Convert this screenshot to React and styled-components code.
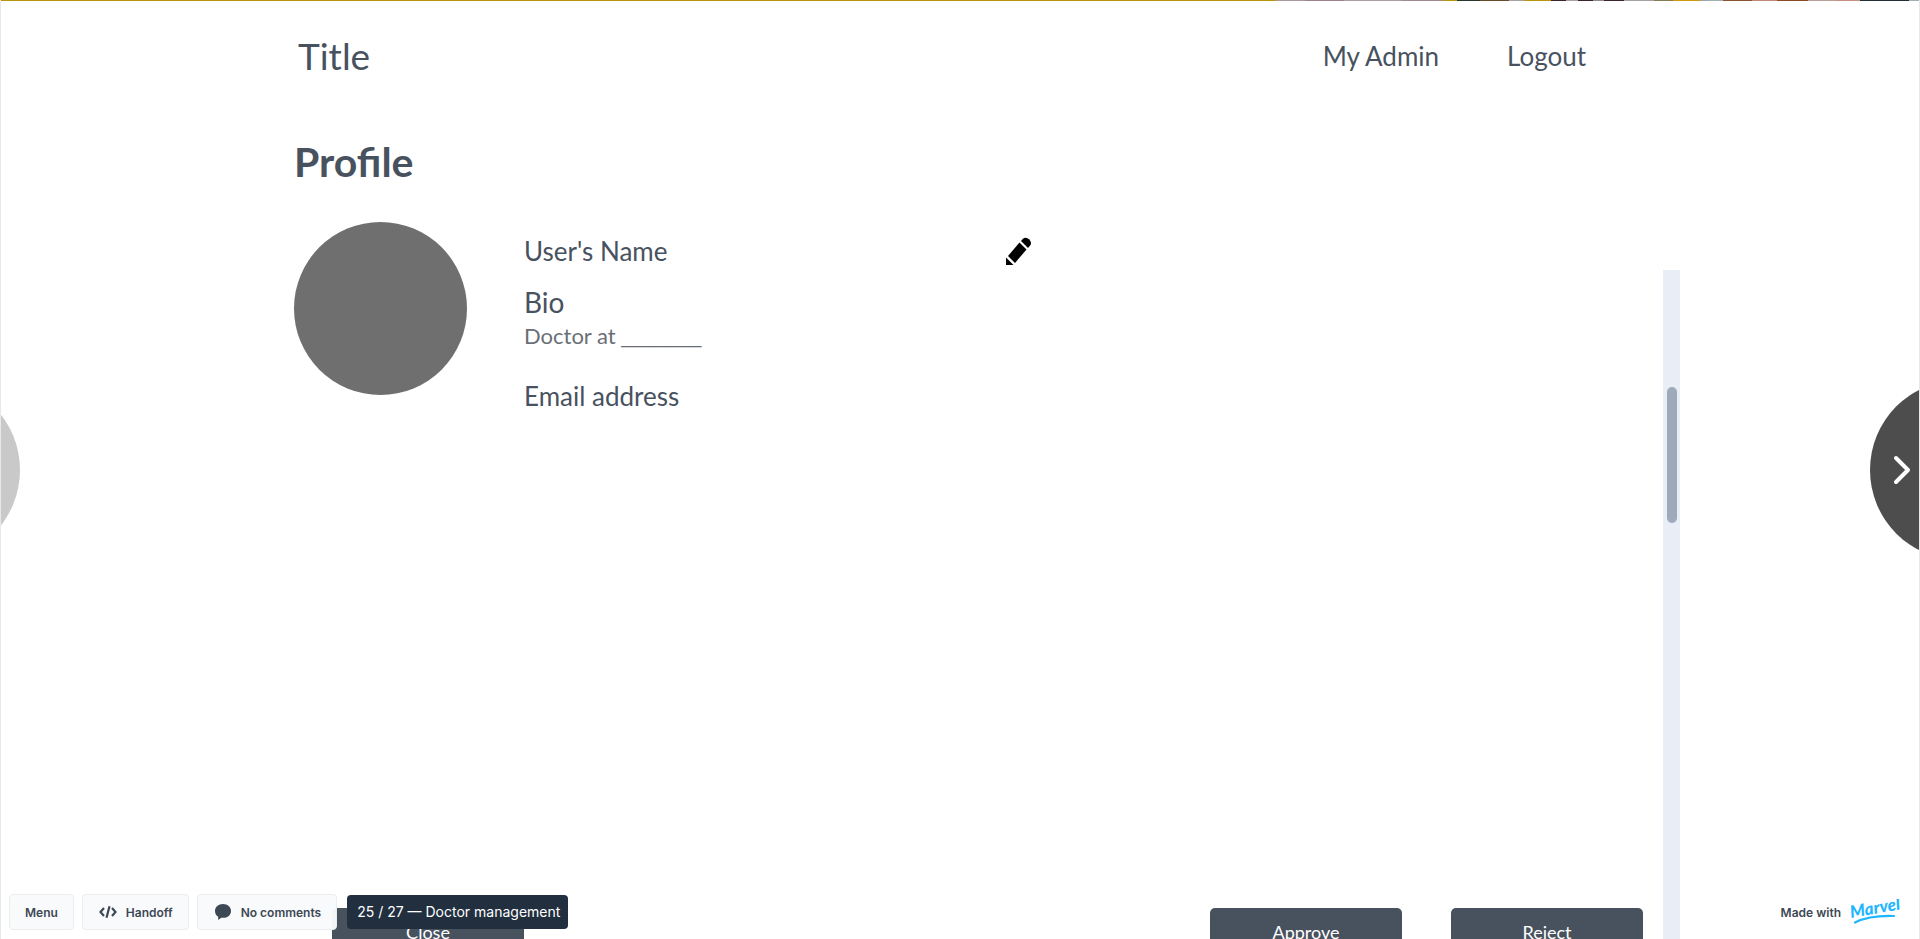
import React from "react";
import styled, { createGlobalStyle } from "styled-components";

const ui = `Inter, "Liberation Sans", sans-serif`;

const GlobalStyle = createGlobalStyle`
  *, *::before, *::after { box-sizing: border-box; }
  body { margin: 0; background: #fff; font-family: Lato, "Liberation Sans", sans-serif; color: #48525f; }
  h1, h2, h3, p { margin: 0; font-weight: 400; }
  button { font: inherit; border: 0; cursor: pointer; }
`;

const Stage = styled.div`
  position: relative;
  height: 100vh;
  overflow: hidden;
  display: flex;
  flex-direction: column;
  border: solid #e8e8e8;
  border-width: 0 1px;
`;

/* The lower edge of the cover photo, which shows above the page. */
const PhotoEdge = styled.div`
  flex: none;
  height: 1px;
  background: linear-gradient(90deg,
    #b8960c 0 66.5%, #a9989c 66.5% 68%, #9c8387 68% 70%, #a9a0a4 70% 73%, #a08a8e 73% 75.2%,
    #b8960c 75.2% 75.9%, #26352f 75.9% 77.1%, #6b4a28 77.1% 78.6%, #a5a0a2 78.6% 79.4%,
    #b8960c 79.4% 80.8%, #3b2430 80.8% 81.6%, #a5a0a2 81.6% 82.2%, #3b2430 82.2% 83%,
    #8f8a90 83% 83.6%, #3b2430 83.6% 84.6%, #a5a0a6 84.6% 86.2%, #857a50 86.2% 87.2%,
    #d09a10 87.2% 88.6%, #a5a0a2 88.6% 89%, #9fb0b0 89% 89.8%, #8a5230 89.8% 91.3%,
    #bf8a78 91.3% 92.6%, #8a4a2a 92.6% 94.2%, #b8a098 94.2% 95.6%, #c98f80 95.6% 96.9%,
    #223036 96.9% 99.5%, #9fb0b0 99.5% 100%);
`;

const Frame = styled.div`
  flex: 1;
  width: 100%;
  max-width: 1440px;
  margin: 0 auto;
  display: flex;
  flex-direction: column;
`;

const Header = styled.header`
  flex: none;
  display: flex;
  justify-content: space-between;
  align-items: center;
  height: 110px;
  padding: 0 94px 0 58px;
`;

const Brand = styled.h1`
  font-size: 37px;
  line-height: 44px;
`;

const Nav = styled.nav`
  display: flex;
  gap: 68px;
`;

const NavLink = styled.a`
  color: inherit;
  text-decoration: none;
  font-size: 26px;
  line-height: 32px;
`;

const Body = styled.div`
  flex: 1;
  display: flex;
  justify-content: space-between;
`;

const Main = styled.main`
  flex: 1;
  display: flex;
  flex-direction: column;
  padding: 26px 20px 0 54px;
`;

const Heading = styled.h2`
  font-size: 41px;
  font-weight: 700;
  line-height: 50px;
`;

const Profile = styled.section`
  display: flex;
  align-items: flex-start;
  padding-top: 35px;
`;

const Avatar = styled.div`
  flex: none;
  width: 173px;
  height: 173px;
  border-radius: 50%;
  background: #6f6f6f;
`;

const Details = styled.div`
  width: 539px;
  padding: 13px 0 0 57px;
`;

const Line = styled.h3`
  font-size: ${(p) => (p.$large ? 28 : 26)}px;
  line-height: 32px;
  margin-bottom: ${(p) => (p.$large ? 2 : 19)}px;
`;

const BioText = styled.p`
  font-size: 22px;
  line-height: 32px;
  color: #6a6f77;
  margin-bottom: 25px;
`;

const Blank = styled.span`
  font-family: "Liberation Sans", sans-serif;
  font-size: 16px;
`;

const EditButton = styled.button`
  display: flex;
  padding: 0;
  margin-top: 15px;
  background: none;
`;

const Actions = styled.div`
  display: flex;
  gap: 49px;
  margin-top: auto;
  height: 31px;
  padding-left: 38px;
`;

const ActionButton = styled.button`
  width: 192px;
  height: 48px;
  border-radius: 5px;
  background: #48525f;
  color: #fff;
  font-size: 18px;
  line-height: 24px;
  margin-right: ${(p) => (p.$first ? "auto" : 0)};
`;

const Track = styled.div`
  width: 17px;
  margin-top: 159px;
  padding: 117px 3px 0 4px;
  background: #e9edf6;
`;

const Thumb = styled.div`
  height: 136px;
  border-radius: 5px;
  background: #9ea9b9;
`;

const PageTurn = styled.button`
  position: absolute;
  top: 50%;
  ${(p) => (p.$next ? "right: -131px;" : "left: -161px;")}
  width: 180px;
  height: 180px;
  margin-top: -90px;
  padding: 0 0 0 22px;
  border-radius: 50%;
  background: ${(p) => (p.$next ? "#4d4d4d" : "#c9c9c9")};
  display: flex;
  align-items: center;
`;

const Toolbar = styled.footer`
  position: absolute;
  left: 8px;
  right: 16px;
  bottom: 9px;
  display: flex;
  align-items: center;
  gap: 8px;
  height: 36px;
  font-family: ${ui};
`;

const ToolButton = styled.button`
  display: flex;
  align-items: center;
  gap: 8px;
  height: 36px;
  padding: 0 15px;
  border: 1px solid #ebecee;
  border-radius: 4px;
  background: rgba(249, 250, 252, 0.97);
  color: #3d4855;
  font-size: 12px;
  font-weight: 600;
`;

const IconSlot = styled.span`
  display: flex;
  justify-content: center;
  width: 20px;
`;

const ScreenBadge = styled.div`
  height: 34px;
  margin-left: 2px;
  padding: 0 8px 0 10px;
  border-radius: 4px;
  background: #212f3f;
  color: #fff;
  font-size: 14px;
  line-height: 34px;
`;

const MadeWith = styled.a`
  display: flex;
  align-items: center;
  gap: 8px;
  margin-left: auto;
  color: #3d4855;
  font-size: 12px;
  font-weight: 600;
  text-decoration: none;
`;

const PencilIcon = () => (
  <svg width="26" height="28" viewBox="0 0 26 28" aria-hidden="true">
    <path d="M13.500 5.500 20.500 12.500 9 26 2 19Z" />
    <path d="M15 4 17 1.800Q20 -.5 23 2.300T24.500 8L22 11Z" />
    <path d="M0 20.500 7.500 28H0Z" />
  </svg>
);

const CodeIcon = () => (
  <svg width="18" height="12" viewBox="0 0 18 12" fill="none" stroke="#3d4855" strokeWidth="2.200" aria-hidden="true">
    <path d="M5 2 1.500 6 5 10M13 2l3.500 4L13 10M10.500 .3l-3 11.400" />
  </svg>
);

const CommentIcon = () => (
  <svg width="16" height="16" viewBox="0 0 16 16" fill="#3d4855" aria-hidden="true">
    <path d="M8 0c4.600 0 8 2.900 8 6.900s-3.400 6.900-8 6.900c-.6 0-1.200 0-1.700-.1L3.200 16v-3.300C1.200 11.500 0 9.400 0 6.900 0 2.900 3.400 0 8 0Z" />
  </svg>
);

const ChevronIcon = () => (
  <svg width="20" height="30" viewBox="0 0 20 30" fill="none" stroke="#fff" strokeWidth="4" strokeLinecap="round" strokeLinejoin="round" aria-hidden="true">
    <path d="M4 3 16 15 4 27" />
  </svg>
);

const MarvelLogo = () => (
  <svg width="54" height="26" viewBox="0 0 54 26" role="img" aria-label="Marvel">
    <text x="2" y="19" transform="rotate(-10 2 19)" fill="#1fb6ff" fontFamily="Lato, sans-serif" fontStyle="italic" fontWeight="900" fontSize="17">Marvel</text>
    <path d="M6 23.500C17 18 30 16.500 45 17" fill="none" stroke="#1fb6ff" strokeWidth="2.200" strokeLinecap="round" />
  </svg>
);

export default function App() {
  return (
    <Stage>
      <GlobalStyle />
      <PhotoEdge />
      <Frame>
        <Header>
          <Brand>Title</Brand>
          <Nav>
            <NavLink href="#admin">My Admin</NavLink>
            <NavLink href="#logout">Logout</NavLink>
          </Nav>
        </Header>
        <Body>
          <Main>
            <Heading>Profile</Heading>
            <Profile>
              <Avatar />
              <Details>
                <Line>User's Name</Line>
                <Line $large>Bio</Line>
                <BioText>Doctor at <Blank>_________</Blank></BioText>
                <Line>Email address</Line>
              </Details>
              <EditButton aria-label="Edit profile"><PencilIcon /></EditButton>
            </Profile>
            <Actions>
              <ActionButton $first>Close</ActionButton>
              <ActionButton>Approve</ActionButton>
              <ActionButton>Reject</ActionButton>
            </Actions>
          </Main>
          <Track><Thumb /></Track>
        </Body>
      </Frame>
      <PageTurn aria-label="Previous screen" />
      <PageTurn $next aria-label="Next screen"><ChevronIcon /></PageTurn>
      <Toolbar>
        <ToolButton>Menu</ToolButton>
        <ToolButton><IconSlot><CodeIcon /></IconSlot>Handoff</ToolButton>
        <ToolButton><IconSlot><CommentIcon /></IconSlot>No comments</ToolButton>
        <ScreenBadge>25 / 27 — Doctor management</ScreenBadge>
        <MadeWith href="#marvel">Made with <MarvelLogo /></MadeWith>
      </Toolbar>
    </Stage>
  );
}
